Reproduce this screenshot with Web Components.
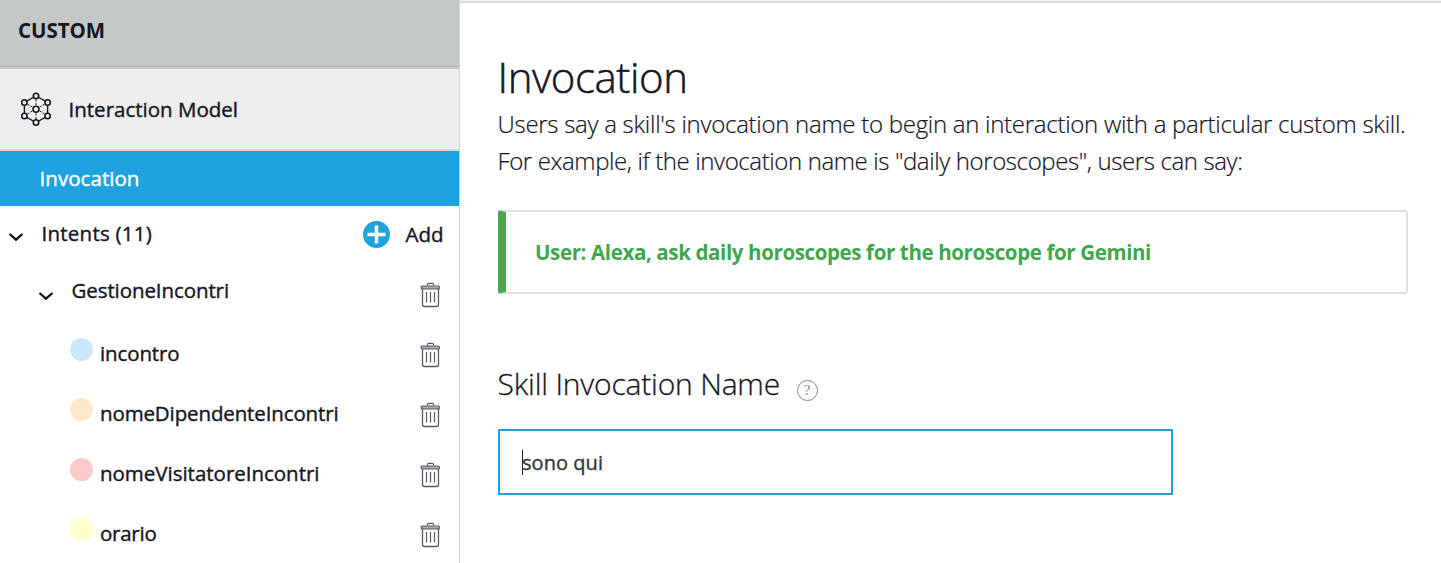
<!DOCTYPE html>
<html lang="en">
<head>
<meta charset="utf-8">
<title>Invocation</title>
<style>
body { margin: 0; background: #fff; font-family: "Open Sans", "Noto Sans", sans-serif; color: #16161f; }
</style>
</head>
<body>
<skill-builder></skill-builder>
<script>
const define = (name, html, ready) => {
  const template = document.createElement('template');
  template.innerHTML = html;
  customElements.define(name, class extends HTMLElement {
    constructor() {
      super();
      this.attachShadow({ mode: 'open' }).append(template.content.cloneNode(true));
    }
    connectedCallback() { if (ready) ready(this, this.shadowRoot); }
  });
};

/* Text tracked so that a line fills its given measure. */
define('fit-text', `<style>:host { display: block; flex: none; } span { display: inline-block; white-space: pre; vertical-align: top; }</style><span><slot></slot></span>`, (host, root) => {
  const span = root.querySelector('span');
  const want = Number(host.getAttribute('measure'));
  const count = host.textContent.length;
  const gap = (want - span.getBoundingClientRect().width) / count;
  span.style.letterSpacing = gap.toFixed(3) + 'px';
});

define('model-icon', `
<style>:host { display: block; flex: none; width: 32px; height: 36px; } svg { display: block; }</style>
<svg width="32" height="36" viewBox="0 0 32 36" fill="none" stroke="#16161f">
  <path d="M16 5 27.600 11.500V25L16 31.500 4.400 25V11.500Z" stroke-width="1.400"/>
  <path d="M16 5V31M4.500 11.500 27.500 24.500M27.500 11.500 4.500 24.500" stroke-width="1" stroke-dasharray="2 1.500"/>
  <g fill="#eee" stroke-width="1.600">
    <circle cx="16" cy="5" r="2.700"/><circle cx="27.600" cy="11.500" r="2.700"/><circle cx="27.600" cy="25" r="2.700"/>
    <circle cx="16" cy="31.500" r="2.700"/><circle cx="4.400" cy="25" r="2.700"/><circle cx="4.400" cy="11.500" r="2.700"/>
    <circle cx="16" cy="18.200" r="3"/>
  </g>
</svg>`);

define('chevron-icon', `
<style>:host { display: block; flex: none; width: 16px; height: 10px; } svg { display: block; }</style>
<svg width="16" height="10" viewBox="0 0 16 10" fill="none" stroke="#111" stroke-width="2.200"><path d="M1.500 2 8 7.700 14.500 2"/></svg>`);

define('add-icon', `
<style>:host { display: block; flex: none; width: 27px; height: 27px; } svg { display: block; }</style>
<svg width="27" height="27" viewBox="0 0 27 27"><circle cx="13.500" cy="13.500" r="13.500" fill="#1ea2e0"/><path d="M13.500 4.500V22.500M4.500 13.500H22.500" stroke="#fff" stroke-width="3.500"/></svg>`);

define('trash-icon', `
<style>:host { display: block; flex: none; width: 20px; height: 26px; } svg { display: block; }</style>
<svg width="20" height="26" viewBox="0 0 20 26" fill="none" stroke="#5a5a66">
  <path d="M7.500 3.500V2.500Q7.500 1.300 8.700 1.300H12.300Q13.500 1.300 13.500 2.500V3.500" stroke-width="1.200"/>
  <rect x="1.100" y="4" width="18.300" height="3" rx="1" fill="#aaa9af" stroke-width="1.100"/>
  <path d="M2.500 7V22.500Q2.500 24.500 4.500 24.500H16.500Q18.500 24.500 18.500 22.500V7" stroke-width="1.300"/>
  <path d="M6.500 10V20.500M10.500 10V20.500M14.500 10V20.500" stroke-width="1.200"/>
</svg>`);

define('slot-row', `
<style>
:host { display: flex; height: 60.100px; padding-left: 70px; font-size: 20.500px; -webkit-text-stroke: .4px currentColor; line-height: 28px; }
i { width: 23px; height: 23px; margin: 18px 7px 0 0; border-radius: 50%; background: var(--dot); flex: none; }
.name { margin-top: 19px; }
trash-icon { margin: 22px 19px 0 auto; }
</style>
<i></i><div class="name"><slot></slot></div><trash-icon></trash-icon>`);

define('side-nav', `
<style>
:host { display: block; width: 459px; border-right: 1px solid #d4d4d4; font-size: 20.500px; -webkit-text-stroke: .4px currentColor; line-height: 28px; overflow: hidden; }
.head { box-sizing: border-box; height: 69px; padding: 16px 18px; background: #c5c8c9; border-bottom: 2px solid #c6c6c6; box-shadow: inset 0 -2px #bbb9ba; font-weight: 700; -webkit-text-stroke: 0; }
.model { box-sizing: border-box; height: 82px; display: flex; padding: 22px 20px 0; background: #eee; border-bottom: 2px solid #d9d9d9; }
.model fit-text { margin: 4px 0 0 16.500px; }
.active { height: 55px; background: #1ea2e0; color: #fff; padding-left: 39.500px; display: flex; }
.active fit-text { margin-top: 13px; }
.intents { display: flex; height: 56px; padding-left: 8px; }
.intents chevron-icon { margin: 26px 17.500px 0 0; }
.intents fit-text { margin-top: 13px; }
.intents add-icon { margin: 15px 15.500px 0 auto; }
.intents .add { margin: 14px 15.500px 0 0; }
.intent { display: flex; height: 58px; padding-left: 38px; }
.intent chevron-icon { margin: 29px 17.500px 0 0; }
.intent fit-text { margin-top: 14px; }
.intent trash-icon { margin: 20px 19px 0 auto; }
</style>
<div class="head"><fit-text measure="87">CUSTOM</fit-text></div>
<div class="model"><model-icon></model-icon><fit-text measure="169.500">Interaction Model</fit-text></div>
<div class="active"><fit-text measure="100">Invocation</fit-text></div>
<div class="intents"><chevron-icon></chevron-icon><fit-text measure="110.500">Intents (11)</fit-text><add-icon></add-icon><fit-text class="add" measure="38">Add</fit-text></div>
<div class="intent"><chevron-icon></chevron-icon><fit-text measure="157.500">GestioneIncontri</fit-text><trash-icon></trash-icon></div>
<slot-row style="--dot:#cbe8ff"><fit-text measure="79.500">incontro</fit-text></slot-row>
<slot-row style="--dot:#ffe7ca"><fit-text measure="238.500">nomeDipendenteIncontri</fit-text></slot-row>
<slot-row style="--dot:#fdcaca"><fit-text measure="219.500">nomeVisitatoreIncontri</fit-text></slot-row>
<slot-row style="--dot:#ffffc9"><fit-text measure="56.500">orario</fit-text></slot-row>`);

define('example-box', `
<style>
:host { display: flex; align-items: center; box-sizing: border-box; width: 910px; height: 84px; padding: 0 0 0 29px; border: 2px solid #e1e1e1; border-left: 8px solid #43a850; border-radius: 3px; color: #3fa74c; font-size: 20.500px; font-weight: 700; line-height: 28px; }
</style><slot></slot>`);

define('help-icon', `
<style>
:host { display: flex; align-items: center; justify-content: center; box-sizing: border-box; width: 21px; height: 21px; border: 1px solid #7e8888; border-radius: 50%; color: #7e8888; font: 15px/19px "Liberation Serif", serif; }
</style>?`);

define('name-field', `
<style>
:host { display: flex; align-items: center; box-sizing: border-box; width: 675px; height: 66px; padding: 1px 0 0 22px; border: 2px solid #1ea2e0; color: #333939; font-size: 20px; -webkit-text-stroke: .4px currentColor; line-height: 28px; }
i { width: 1px; height: 25px; background: #222; margin-right: -1px; }
</style><i></i><slot></slot>`);

define('invocation-page', `
<style>
:host { display: block; flex: 1; border-top: 1px solid #f4f4f4; }
.rule { height: 2px; background: #d9d9d9; }
.body { padding: 45px 0 0 37.500px; }
h1 { margin: 0; font-size: 42px; font-weight: 300; -webkit-text-stroke: .5px currentColor; line-height: 58px; height: 57px; }
p { margin: 0; font-size: 24px; font-weight: 300; -webkit-text-stroke: .2px currentColor; line-height: 37px; }
example-box { margin: 31px 0 0 .5px; }
.label { display: flex; margin-top: 70px; height: 40px; font-size: 30px; font-weight: 300; -webkit-text-stroke: .3px currentColor; line-height: 40px; }
help-icon { margin: 16px 0 0 16.500px; -webkit-text-stroke: 0; }
name-field { margin: 25px 0 0 .5px; }
</style>
<div class="rule"></div>
<div class="body">
<h1><fit-text measure="190">Invocation</fit-text></h1>
<p><fit-text measure="908">Users say a skill's invocation name to begin an interaction with a particular custom skill.</fit-text>
<fit-text measure="745">For example, if the invocation name is "daily horoscopes", users can say:</fit-text></p>
<example-box><fit-text measure="616">User: Alexa, ask daily horoscopes for the horoscope for Gemini</fit-text></example-box>
<div class="label"><fit-text measure="282.500">Skill Invocation Name</fit-text><help-icon></help-icon></div>
<name-field><fit-text measure="81">sono qui</fit-text></name-field>
</div>`);

define('skill-builder', `
<style>:host { display: flex; height: 563px; overflow: hidden; }</style>
<side-nav></side-nav><invocation-page></invocation-page>`);
</script>
</body>
</html>
